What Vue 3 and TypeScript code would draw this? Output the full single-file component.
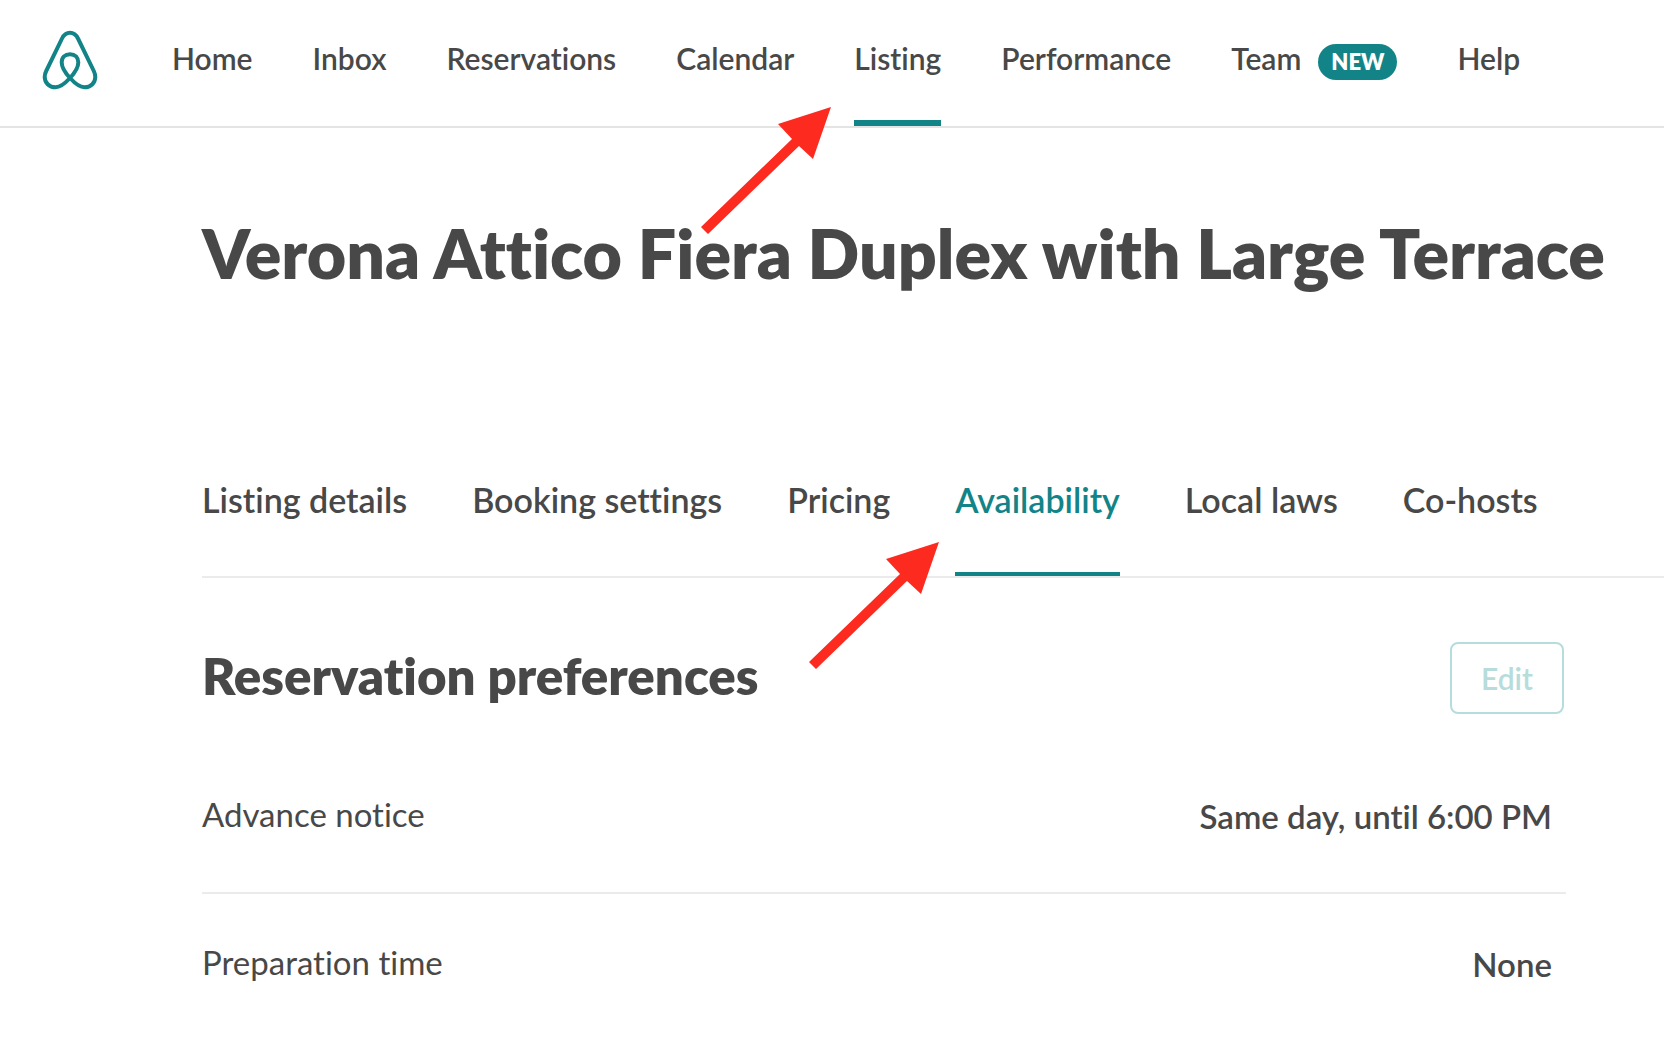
<script setup lang="ts">
interface NavItem {
  label: string
  badge?: string
  active?: boolean
}

interface Preference {
  label: string
  value: string
}

const navItems: NavItem[] = [
  { label: 'Home' },
  { label: 'Inbox' },
  { label: 'Reservations' },
  { label: 'Calendar' },
  { label: 'Listing', active: true },
  { label: 'Performance' },
  { label: 'Team', badge: 'NEW' },
  { label: 'Help' },
]

const tabs: NavItem[] = [
  { label: 'Listing details' },
  { label: 'Booking settings' },
  { label: 'Pricing' },
  { label: 'Availability', active: true },
  { label: 'Local laws' },
  { label: 'Co-hosts' },
]

const preferences: Preference[] = [
  { label: 'Advance notice', value: 'Same day, until 6:00 PM' },
  { label: 'Preparation time', value: 'None' },
]
</script>

<template>
  <div class="page">
    <header class="topbar">
      <a class="logo" href="#" aria-label="Airbnb">
        <svg viewBox="0 0 56 60" width="56" height="60" aria-hidden="true">
          <path
            d="M28 48C22 41.500 19.700 36.500 19.700 32.500C19.700 27.500 23 24.300 28 24.300S36.300 27.500 36.300 32.500C36.300 36.500 34 41.500 28 48C22.500 54 18 57.300 13.500 57.300C7 57.300 2.700 52.500 2.700 47C2.700 44.800 3.200 43 4.200 41L20 8.500C22 4.500 24.300 2.800 28 2.800S34 4.500 36 8.500L51.800 41C52.800 43 53.300 44.800 53.300 47C53.300 52.500 49 57.300 42.500 57.300C38 57.300 33.500 54 28 48Z"
          />
        </svg>
      </a>
      <nav class="nav" aria-label="Main">
        <a
          v-for="item in navItems"
          :key="item.label"
          href="#"
          class="nav-link"
          :class="{ active: item.active }"
        >
          <span>{{ item.label }}</span>
          <span v-if="item.badge" class="badge">{{ item.badge }}</span>
        </a>
      </nav>
    </header>

    <main class="content">
      <h1 class="title">Verona Attico Fiera Duplex with Large Terrace</h1>

      <nav class="tabs" aria-label="Listing sections">
        <a
          v-for="tab in tabs"
          :key="tab.label"
          href="#"
          class="tab"
          :class="{ active: tab.active }"
          >{{ tab.label }}</a
        >
      </nav>

      <section class="section">
        <div class="section-head">
          <h2>Reservation preferences</h2>
          <button type="button" class="edit">Edit</button>
        </div>
        <dl class="rows">
          <div v-for="row in preferences" :key="row.label" class="row">
            <dt>{{ row.label }}</dt>
            <dd>{{ row.value }}</dd>
          </div>
        </dl>
      </section>
    </main>

    <svg class="arrow arrow-nav" viewBox="0 0 130 128" width="130" height="128" aria-hidden="true">
      <path d="M130 0L77 17L91 32L0 120L7 127L98 39L112 52Z" />
    </svg>
    <svg class="arrow arrow-tab" viewBox="0 0 130 128" width="130" height="128" aria-hidden="true">
      <path d="M130 0L77 17L91 32L0 120L7 127L98 39L112 52Z" />
    </svg>
  </div>
</template>

<style>
body {
  background: #fff;
  overflow-x: hidden;
}
</style>

<style scoped>
.page {
  position: relative;
  color: #484848;
  font-family: Lato, 'Liberation Sans', sans-serif;
  font-variant-ligatures: none;
  overflow: hidden;
}

a {
  color: inherit;
  text-decoration: none;
}

.topbar {
  display: flex;
  border-bottom: 2px solid #e4e4e4;
  height: 126px;
}

.logo {
  display: flex;
  align-items: center;
  margin: 0 74px 6px 42px;
}

.logo path {
  fill: none;
  stroke: #128488;
  stroke-width: 4;
}

.nav {
  display: flex;
  gap: 60px;
  white-space: nowrap;
}

.nav-link {
  box-sizing: border-box;
  display: flex;
  align-items: baseline;
  gap: 17px;
  height: 126px;
  padding-top: 40px;
  border-bottom: 6px solid transparent;
  font-size: 30px;
  font-weight: 600;
  line-height: 36px;
}

.nav-link.active {
  border-bottom-color: #128488;
}

.badge {
  padding: 0 13px;
  border-radius: 18px;
  background: #128488;
  color: #fff;
  font-size: 22px;
  font-weight: 800;
}

.content {
  padding-left: 202px;
}

.title {
  margin: 85px 0 0;
  font-size: 68px;
  font-weight: 800;
  line-height: 80px;
  white-space: nowrap;
}

.tabs {
  display: flex;
  gap: 65px;
  margin-top: 187px;
  border-bottom: 2px solid #ebebeb;
  white-space: nowrap;
}

.tab {
  padding-bottom: 52px;
  border-bottom: 4px solid transparent;
  font-size: 34px;
  font-weight: 600;
  line-height: 40px;
}

.tab.active {
  border-bottom-color: #128488;
  color: #128488;
}

.section {
  margin-right: 98px;
}

.section-head {
  display: flex;
  align-items: center;
  justify-content: space-between;
  padding: 64px 2px 32px 0;
}

h2 {
  margin: 0;
  padding-bottom: 4px;
  font-size: 51px;
  font-weight: 800;
  line-height: 60px;
}

.edit {
  box-sizing: border-box;
  width: 114px;
  height: 72px;
  border: 2px solid #b6dcdc;
  border-radius: 8px;
  background: #fff;
  color: #b6dcdc;
  font-family: inherit;
  font-size: 30px;
  font-weight: 600;
}

.rows {
  margin: 0;
}

.row {
  display: flex;
  justify-content: space-between;
  padding: 48px 14px 56px 0;
  font-size: 33px;
  line-height: 40px;
}

.row + .row {
  border-top: 2px solid #ebebeb;
}

dd {
  margin: 0;
  padding-top: 2px;
  font-weight: 600;
}

.arrow {
  position: absolute;
  fill: #fd2b1f;
}

.arrow-nav {
  left: 701px;
  top: 107px;
}

.arrow-tab {
  left: 809px;
  top: 542px;
}
</style>
